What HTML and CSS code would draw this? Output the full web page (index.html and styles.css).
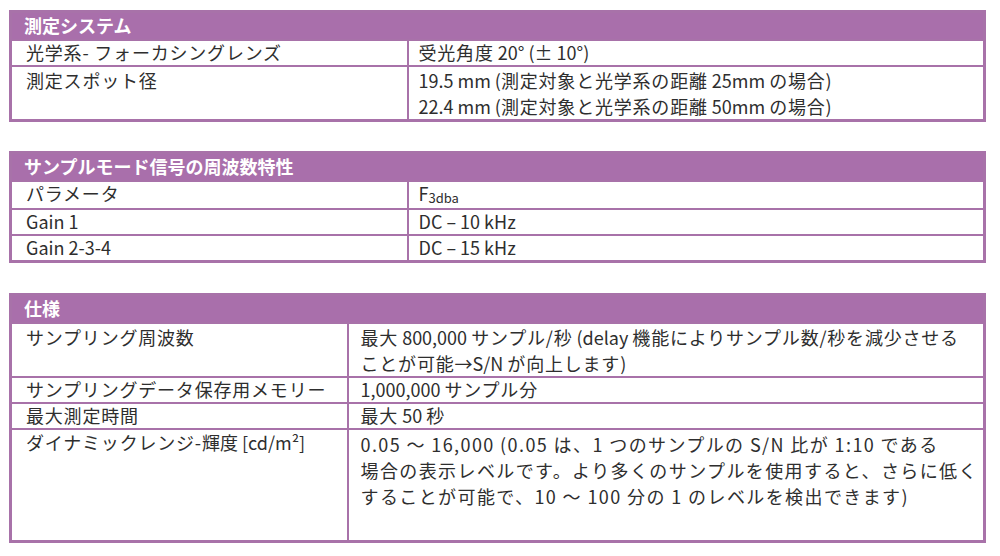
FILE: index.html
```html
<!DOCTYPE html>
<html lang="ja">
<head>
<meta charset="utf-8">
<title>仕様</title>
<link rel="stylesheet" href="styles.css">
</head>
<body>
<table class="spec t1">
  <colgroup><col class="c-left"><col></colgroup>
  <tr><th colspan="2">測定システム</th></tr>
  <tr><td><span class="ja">光学系- フォーカシングレンズ</span></td><td><span class="ja">受光角度</span> 20° (± 10°)</td></tr>
  <tr class="r2"><td><span class="ja">測定スポット径</span></td><td>19.5 mm (<span class="ja">測定対象と光学系の距離</span> 25mm <span class="ja">の場合</span>)<br>22.4 mm (<span class="ja">測定対象と光学系の距離</span> 50mm <span class="ja">の場合</span>)</td></tr>
</table>

<table class="spec t2">
  <colgroup><col class="c-left"><col></colgroup>
  <tr><th colspan="2">サンプルモード信号の周波数特性</th></tr>
  <tr><td><span class="ja">パラメータ</span></td><td>F<span class="sub">3dba</span></td></tr>
  <tr><td>Gain 1</td><td>DC – 10 kHz</td></tr>
  <tr><td>Gain 2-3-4</td><td>DC – 15 kHz</td></tr>
</table>

<table class="spec t3">
  <colgroup><col class="c-left3"><col></colgroup>
  <tr><th colspan="2">仕様</th></tr>
  <tr class="r2"><td><span class="ja">サンプリング周波数</span></td><td><span class="ja">最大</span> 800,000 <span class="ja">サンプル/秒</span> (delay <span class="ja">機能によりサンプル数/秒を減少させる</span><br><span class="ja">ことが可能</span>→S/N <span class="ja">が向上します</span>)</td></tr>
  <tr><td><span class="ja">サンプリングデータ保存用メモリー</span></td><td>1,000,000 <span class="ja">サンプル分</span></td></tr>
  <tr><td><span class="ja">最大測定時間</span></td><td><span class="ja">最大</span> 50 <span class="ja">秒</span></td></tr>
  <tr class="tall"><td><span class="ja">ダイナミックレンジ-</span>輝度 [cd/m²]</td><td class="dense"><span class="line">0.05 〜 16,000 (0.05 は、1 つのサンプルの S/N 比が 1:10 である</span><span class="line">場合の表示レベルです。より多くのサンプルを使用すると、さらに低く</span><span class="line">することが可能で、10 〜 100 分の 1 のレベルを検出できます)</span></td></tr>
</table>
</body>
</html>
```

FILE: styles.css
```css
html, body {
  margin: 0;
  padding: 0;
  background: #ffffff;
}

body {
  padding: 10px 14px 0 9px;
  font-family: "Noto Sans CJK JP", "Noto Sans", sans-serif;
  font-size: 18px;
  color: #2e2e2e;
}

.spec {
  width: 977px;
  border-collapse: collapse;
  border: 3px solid #a872a9;
  table-layout: fixed;
}

.t2 { margin-top: 29px; }
.t3 { margin-top: 30px; }

.c-left { width: 397px; }
.c-left3 { width: 337px; }

.spec th {
  background: #a96fab;
  color: #ffffff;
  font-weight: bold;
  text-align: left;
  line-height: 25px;
  padding: 0 12px 1px;
  border: 2px solid #a872a9;
}

.spec td {
  line-height: 23px;
  padding: 0 10px 1px;
  border: 2px solid #a872a9;
  vertical-align: top;
  white-space: nowrap;
}

.spec td:first-child {
  padding-left: 14px;
}

.t3 td:last-child {
  padding-left: 12px;
}

.ja {
  letter-spacing: 0.8px;
}

.r2 td {
  line-height: 26px;
  padding-bottom: 0;
}

.tall td {
  height: 108px;
  padding-top: 1px;
}

.dense {
  letter-spacing: 1.4px;
}

.line {
  display: block;
  line-height: 26px;
}

.sub {
  font-size: 13px;
  position: relative;
  top: 2px;
}
```
